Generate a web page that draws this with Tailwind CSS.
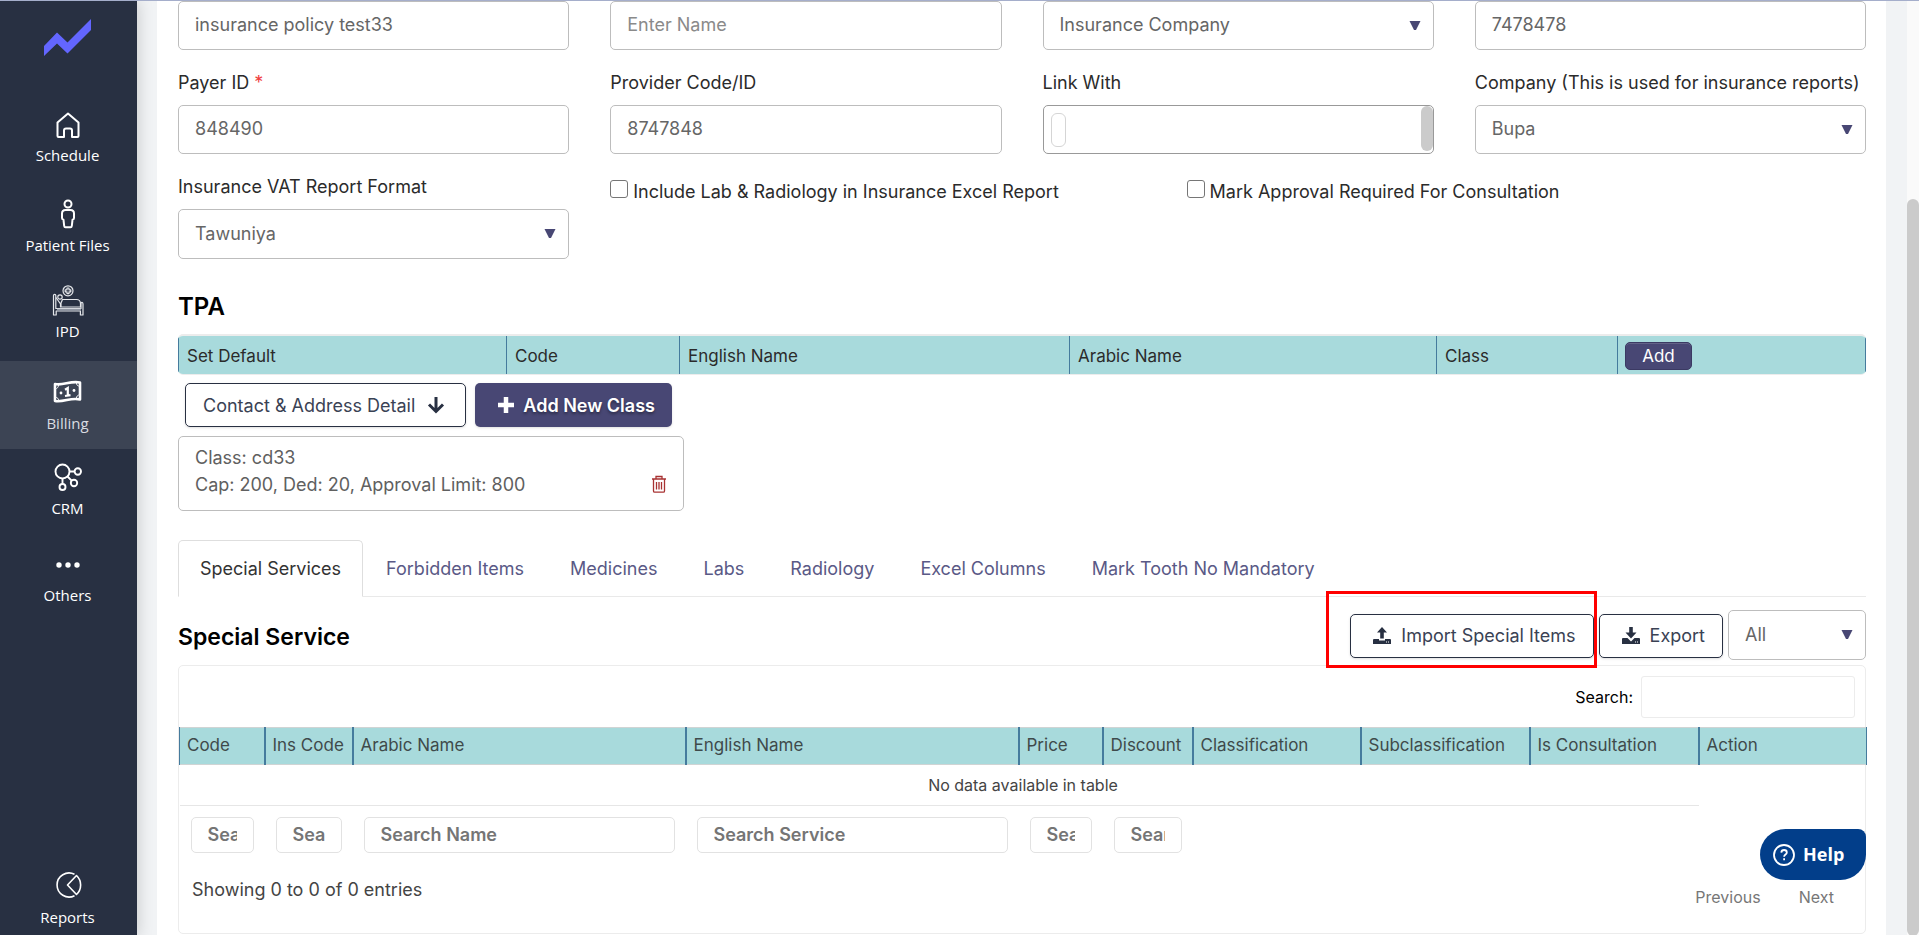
<!DOCTYPE html>
<html lang="en">
<head>
  <meta charset="UTF-8" />
  <meta name="viewport" content="width=device-width, initial-scale=1.0"/>
  <title>Insurance Policy</title>
  <script src="https://cdn.jsdelivr.net/npm/@tailwindcss/browser@4"></script>
</head>
<body class="h-screen overflow-hidden flex bg-[#f1f3f5] font-['Inter',sans-serif] text-[18px] font-normal text-[#2b2b2b] border-t border-[#a5aecb]">

  <!-- Sidebar -->
  <aside class="w-[137px] shrink-0 h-screen flex flex-col bg-[#283042] text-white font-['Open_Sans',sans-serif] text-[15px] shadow-[2px_0_14px_rgba(0,0,0,0.15)] z-10">
    <a href="#" aria-label="Home" class="h-[93px] shrink-0 flex justify-center pt-[18px] pr-0.5">
      <svg class="w-[47px] h-[37px]" viewBox="0 0 47 37" fill="#6366ff"><path d="M0 27 13 13.500 23.500 23.500 47 0V11L23.500 34.500 13 24.500 0 37Z"/></svg>
    </a>
    <nav class="flex-1 flex flex-col text-center">
      <a href="#" class="flex flex-col items-center gap-[3px] py-[15px] pr-0.5 mb-0.5">
        <svg class="w-8 h-8" viewBox="0 0 32 32" fill="none" stroke="#fff" stroke-width="2" stroke-linejoin="round"><path d="M5.500 13.500 16 4.500l10.500 9V27a1 1 0 0 1-1 1H20v-6.500a2 2 0 0 0-2-2h-4a2 2 0 0 0-2 2V28H6.500a1 1 0 0 1-1-1Z"/></svg>
        <span class="leading-[22px]">Schedule</span>
      </a>
      <a href="#" class="flex flex-col items-center gap-1 py-[15px] pr-0.5">
        <svg class="w-8 h-8" viewBox="0 0 32 32" fill="none" stroke="#fff" stroke-width="2" stroke-linejoin="round"><circle cx="16" cy="6" r="3.500"/><path d="M13.500 12h5c2 0 3.500 1.500 3.500 3.500V20c0 1-.6 1.600-1.500 1.800l-.7 6.200c-.1.900-.6 1.300-1.300 1.300h-5c-.7 0-1.200-.4-1.300-1.300l-.7-6.200C10.600 21.600 10 21 10 20v-4.500c0-2 1.500-3.500 3.500-3.500Z"/></svg>
        <span class="leading-[22px]">Patient Files</span>
      </a>
      <a href="#" class="flex flex-col items-center gap-[3px] pt-3.5 pb-[19px] pr-0.5">
        <svg class="w-8 h-8" viewBox="0 0 32 32" fill="none" stroke="#e4e6ea" stroke-width="1.200" stroke-linejoin="round"><circle cx="16" cy="5.800" r="5"/><path d="M15 3h2v1.800h1.800v2H17v1.800h-2V6.800h-1.800v-2H15Z"/><path d="M1.500 30V10.500c0-1.500 2.300-1.500 2.300 0V23.500H29V19c0-2.500 2-2 2 0v11h-2.600v-4H4.200v4Z"/><circle cx="8" cy="12" r="2.200"/><path d="M4 12.500 8.500 19v3.500M10.500 14.500h14c2.500 0 4 2 4 4v3.500H9v-4Z"/><path stroke="#9197a3" stroke-width="2" d="M5 24.800h24"/></svg>
        <span class="leading-[22px]">IPD</span>
      </a>
      <a href="#" class="flex flex-col items-center gap-1 py-[15px] pr-0.5 bg-[#3c4454] text-[#d9dce1]">
        <svg class="w-8 h-8" viewBox="0 0 32 32"><path fill="none" stroke="#fff" stroke-width="2.600" stroke-linejoin="round" d="M3 8c8 2 15-3.500 25-1.500v17c-9-2.500-16 3-25 1.500Z"/><path fill="#3c4454" stroke="#fff" stroke-width="1" d="M3.500 12.500c2 0 3-1.500 3-3.500M24.500 7c0 2 1 3 3 3M3.500 21.500c2 0 3 1 3 2.800M27.500 19c-2 0-3 1.500-3 3"/><circle cx="9" cy="17" r="1.400" fill="#fff"/><circle cx="22" cy="14.500" r="1.400" fill="#fff"/><path fill="none" stroke="#fff" stroke-width="2.200" d="M13 13.700 15.800 12v7.500M13 20l5.500-.8"/></svg>
        <span class="leading-[22px]">Billing</span>
      </a>
      <a href="#" class="flex flex-col items-center gap-[3px] pt-[13px] pb-[15px] pr-0.5">
        <svg class="w-8 h-8" viewBox="0 0 32 32" fill="none" stroke="#fff" stroke-width="1.900"><circle cx="10.500" cy="9.500" r="7"/><circle cx="25.800" cy="9.500" r="3.200"/><circle cx="22" cy="21" r="3.200"/><circle cx="10.500" cy="25" r="3"/><path d="M17.500 9.500h5M10.500 16.500V22M15.500 14.500l4.200 4.200"/></svg>
        <span class="leading-[22px]">CRM</span>
      </a>
      <a href="#" class="flex flex-col items-center gap-[3px] py-[15px] pr-0.5">
        <svg class="w-8 h-8" viewBox="0 0 32 32" fill="#fff"><circle cx="7" cy="16" r="2.700"/><circle cx="16" cy="16" r="2.700"/><circle cx="25" cy="16" r="2.700"/></svg>
        <span class="leading-[22px]">Others</span>
      </a>
      <a href="#" class="flex flex-col items-center gap-1 pb-2 pr-0.5 mt-auto">
        <svg class="w-8 h-8" viewBox="0 0 32 32" fill="none" stroke="#fff" stroke-width="1.600" stroke-linejoin="round"><path d="M22.500 4.300A12 12 0 1 0 22.500 25.700"/><path d="M24.500 5.500 15.500 15l9 9.500a13 13 0 0 0 0-19Z"/></svg>
        <span class="leading-[22px]">Reports</span>
      </a>
    </nav>
  </aside>

  <main class="flex-1 min-w-0 ml-5 mr-[21px] bg-white">
    <form>
      <!-- Policy fields -->
      <div class="flex">
        <div class="w-1/4 pl-[21px] pr-5">
          <input type="text" aria-label="Policy Name" value="insurance policy test33" class="block w-full h-[49px] px-4 pb-0.5 border border-[#bdbdbd] rounded-[5px] text-[#666]"/>
        </div>
        <div class="w-1/4 pl-[21px] pr-5">
          <input type="text" aria-label="Name" placeholder="Enter Name" class="block w-full h-[49px] px-4 pb-0.5 border border-[#bdbdbd] rounded-[5px] placeholder:text-[#8a8a8a]"/>
        </div>
        <div class="w-1/4 pl-[21px] pr-5">
          <div class="relative">
            <select aria-label="Type" class="block appearance-none w-full h-[49px] px-4 pb-0.5 border border-[#bdbdbd] rounded-[5px] text-[#666]"><option>Insurance Company</option></select>
            <svg class="absolute right-[13px] top-5 w-3 h-[9px] pointer-events-none" viewBox="0 0 12 9" fill="#484774"><path d="M.5 0h11L7 9H5Z"/></svg>
          </div>
        </div>
        <div class="w-1/4 pl-[21px] pr-5">
          <input type="text" aria-label="Number" value="7478478" class="block w-full h-[49px] px-4 pb-0.5 border border-[#bdbdbd] rounded-[5px] text-[#666]"/>
        </div>
      </div>

      <div class="flex mt-[19px]">
        <div class="w-1/4 pl-[21px] pr-5">
          <label for="payer" class="block leading-[27px] mb-[9px]">Payer ID <span class="text-[#f03e3e]">*</span></label>
          <input id="payer" type="text" value="848490" class="block w-full h-[49px] px-4 pb-0.5 border border-[#bdbdbd] rounded-[5px] text-[#666]"/>
        </div>
        <div class="w-1/4 pl-[21px] pr-5">
          <label for="provider" class="block leading-[27px] mb-[9px]">Provider Code/ID</label>
          <input id="provider" type="text" value="8747848" class="block w-full h-[49px] px-4 pb-0.5 border border-[#bdbdbd] rounded-[5px] text-[#666]"/>
        </div>
        <div class="w-1/4 pl-[21px] pr-5">
          <label for="link" class="block leading-[27px] mb-[9px]">Link With</label>
          <div class="flex justify-between h-[49px] pl-[7px] border border-[#999] rounded-[5px]">
            <input id="link" type="text" class="w-[15px] h-[34px] mt-[7px] border border-[#d5d5d5] rounded-[6px]"/>
            <div class="w-3 h-[45px] rounded-full bg-[#cbcbcb]"></div>
          </div>
        </div>
        <div class="w-1/4 pl-[21px] pr-5">
          <label for="company" class="block leading-[27px] mb-[9px] whitespace-nowrap">Company (This is used for insurance reports)</label>
          <div class="relative">
            <select id="company" class="block appearance-none w-full h-[49px] px-4 pb-0.5 border border-[#bdbdbd] rounded-[5px] text-[#666]"><option>Bupa</option></select>
            <svg class="absolute right-[13px] top-5 w-3 h-[9px] pointer-events-none" viewBox="0 0 12 9" fill="#484774"><path d="M.5 0h11L7 9H5Z"/></svg>
          </div>
        </div>
      </div>

      <div class="flex mt-[19px]">
        <div class="w-1/4 pl-[21px] pr-5">
          <label for="vat" class="block leading-[27px] mb-[9px]">Insurance VAT Report Format</label>
          <div class="relative">
            <select id="vat" class="block appearance-none w-full h-[50px] px-4 pb-0.5 border border-[#bdbdbd] rounded-[5px] text-[#666]"><option>Tawuniya</option></select>
            <svg class="absolute right-[13px] top-5 w-3 h-[9px] pointer-events-none" viewBox="0 0 12 9" fill="#484774"><path d="M.5 0h11L7 9H5Z"/></svg>
          </div>
        </div>
        <div class="w-1/3 pl-[21px] pt-[5px]">
          <label class="flex gap-[5px] leading-[27px]"><input type="checkbox" class="appearance-none w-[18px] h-[18px] mt-0.5 border border-[#767676] rounded-[3px]"/>Include Lab &amp; Radiology in Insurance Excel Report</label>
        </div>
        <div class="w-1/3 pl-[21px] pt-[5px]">
          <label class="flex gap-[5px] leading-[27px]"><input type="checkbox" class="appearance-none w-[18px] h-[18px] mt-0.5 border border-[#767676] rounded-[3px]"/>Mark Approval Required For Consultation</label>
        </div>
      </div>

      <div class="pl-[21px] pr-5">
        <!-- TPA -->
        <h2 class="mt-[30px] mb-[9px] text-[24px] leading-9 font-semibold text-black">TPA</h2>
        <div class="border-t-2 border-b border-[#ececec] rounded-[5px] overflow-hidden">
          <table class="table-fixed w-full bg-[#a8dadc] text-left text-[17px]">
            <colgroup><col class="w-[328px]"/><col class="w-[173px]"/><col class="w-[390px]"/><col class="w-[367px]"/><col class="w-[181px]"/><col class="w-[248px]"/></colgroup>
            <tr class="h-[38px]">
              <th class="px-2 pt-[3px] font-normal border-x border-[#457b9d]">Set Default</th>
              <th class="px-2 pt-[3px] font-normal border-x border-[#457b9d]">Code</th>
              <th class="px-2 pt-[3px] font-normal border-x border-[#457b9d]">English Name</th>
              <th class="px-2 pt-[3px] font-normal border-x border-[#457b9d]">Arabic Name</th>
              <th class="px-2 pt-[3px] font-normal border-x border-[#457b9d]">Class</th>
              <th class="px-[7px] pt-px font-normal border-x border-[#457b9d]"><button type="button" class="block w-[67px] h-7 rounded-[5px] border border-[#3b3a63] bg-[#484774] text-white text-[17px] leading-6 shadow-[inset_0_1px_0_rgba(255,255,255,0.15)]">Add</button></th>
            </tr>
          </table>
        </div>
        <div class="flex gap-[9px] mt-2 ml-[7px]">
          <button type="button" class="flex items-center gap-3 h-11 pl-[17px] pr-5 border border-[#283042] rounded-[5px] text-[#3a4254] shadow-sm">Contact &amp; Address Detail
            <svg class="w-[18px] h-[18px]" viewBox="0 0 18 18" fill="none" stroke="#283042" stroke-width="3"><path d="M9 1v14M2 8.500l7 7 7-7"/></svg>
          </button>
          <button type="button" class="flex items-center gap-[9px] h-11 pl-[23px] pr-[17px] rounded-[5px] bg-[#484774] text-white font-semibold [text-shadow:0_2px_3px_rgba(0,0,0,0.4)] shadow-sm">
            <svg class="w-4 h-4" viewBox="0 0 16 16" stroke="#fff" stroke-width="4.500"><path d="M8 0v16M0 8h16"/></svg>Add New Class
          </button>
        </div>
        <div class="flex items-end justify-between w-[506px] h-[75px] mt-[9px] px-4 border border-[#bdbdbd] rounded-[5px] leading-[27px] text-[#606060]">
          <p class="pb-3 whitespace-nowrap">Class: cd33<br/>Cap: 200, Ded: 20, Approval Limit: 800</p>
          <button type="button" aria-label="Delete class" class="mb-[17px]">
            <svg class="w-4 h-[18px]" viewBox="0 0 16 18" fill="none" stroke="#a83232" stroke-width="1.300"><path d="M1 4h14M5 4V1.500h6V4M2.500 4v12c0 .8.400 1.200 1.200 1.200h8.600c.8 0 1.200-.4 1.200-1.200V4M5.500 7v7.500M8 7v7.500M10.500 7v7.500"/></svg>
          </button>
        </div>

        <!-- Tabs -->
        <div class="flex h-[57px] mt-[29px] border-b border-[#e9e9e9] text-[#5a5986]">
          <a href="#" class="flex items-center px-[21px] -mb-px border border-b-white border-[#dedede] rounded-t-[5px] bg-white text-[#333]">Special Services</a>
          <a href="#" class="flex items-center px-[23px]">Forbidden Items</a>
          <a href="#" class="flex items-center px-[23px]">Medicines</a>
          <a href="#" class="flex items-center px-[23px]">Labs</a>
          <a href="#" class="flex items-center px-[23px]">Radiology</a>
          <a href="#" class="flex items-center px-[23px]">Excel Columns</a>
          <a href="#" class="flex items-center px-[23px]">Mark Tooth No Mandatory</a>
        </div>

        <div class="flex items-center gap-[5px] pt-[13px] pb-[5px]">
          <h2 class="mr-auto pt-1 text-[23px] leading-9 font-semibold text-black">Special Service</h2>
          <div class="relative pt-px">
            <button type="button" class="flex items-center gap-2.5 h-11 pl-[22px] pr-[17px] border border-[#283042] rounded-[5px] text-[#3a4254] shadow-sm">
              <svg class="w-[18px] h-[18px]" viewBox="0 0 18 18" fill="#283042"><path d="M9 0 14 5.500h-3.200V11.500H7.200V5.500H4Z"/><path d="M1 12h5v1.500h6V12h5a1 1 0 0 1 1 1v4H0v-4a1 1 0 0 1 1-1Zm12 2.500v1h1v-1Zm2 0v1h1v-1Z" fill-rule="evenodd"/></svg>Import Special Items
            </button>
            <div class="absolute -left-6 -right-[3px] -top-[22px] -bottom-2.5 border-[3px] border-[#f00] pointer-events-none"></div>
          </div>
          <div class="pt-px">
            <button type="button" class="flex items-center gap-2.5 h-11 pl-[22px] pr-[17px] border border-[#283042] rounded-[5px] text-[#3a4254] shadow-sm">
              <svg class="w-[18px] h-[18px]" viewBox="0 0 18 18" fill="#283042"><path d="M7.200 0h3.600v5.500H14.500L9 11.500 3.500 5.500H7.200Z"/><path d="M1 11h4.500L9 14.500 12.500 11H17a1 1 0 0 1 1 1v5H0v-5a1 1 0 0 1 1-1Zm12 3.500v1h1v-1Zm2 0v1h1v-1Z" fill-rule="evenodd"/></svg>Export
            </button>
          </div>
          <div class="relative w-[138px]">
            <select aria-label="Filter" class="block appearance-none w-full h-[50px] px-4 pb-0.5 border border-[#bdbdbd] rounded-[5px] text-[#666]"><option>All</option></select>
            <svg class="absolute right-[13px] top-5 w-3 h-[9px] pointer-events-none" viewBox="0 0 12 9" fill="#484774"><path d="M.5 0h11L7 9H5Z"/></svg>
          </div>
        </div>

        <!-- Special services table -->
        <div class="border border-[#ececec] rounded-[5px]">
          <div class="flex justify-end items-center gap-2 h-[61px] pr-2.5">
            <label for="search" class="text-[16px] text-black">Search:</label>
            <input id="search" type="search" class="w-[214px] h-[42px] px-3 border border-[#ececec] rounded-[3px]"/>
          </div>
          <table class="table-fixed w-full text-left text-[17px]">
            <colgroup><col class="w-[85px]"/><col class="w-[88px]"/><col class="w-[333px]"/><col class="w-[333px]"/><col class="w-[84px]"/><col class="w-[90px]"/><col class="w-[168px]"/><col class="w-[169px]"/><col class="w-[169px]"/><col class="w-[168px]"/></colgroup>
            <thead>
              <tr class="h-[37px] bg-[#a8dadc] border-y border-[#d0d4d4] text-[#3f4a4b] whitespace-nowrap">
                <th class="pl-[7px] font-normal border-l border-r-2 border-x-[#457b9d]">Code</th>
                <th class="pl-[7px] font-normal border-r-2 border-x-[#457b9d]">Ins Code</th>
                <th class="pl-[7px] font-normal border-r-2 border-x-[#457b9d]">Arabic Name</th>
                <th class="pl-[7px] font-normal border-r-2 border-x-[#457b9d]">English Name</th>
                <th class="pl-[7px] font-normal border-r-2 border-x-[#457b9d]">Price</th>
                <th class="pl-[7px] font-normal border-r-2 border-x-[#457b9d]">Discount</th>
                <th class="pl-[7px] font-normal border-r-2 border-x-[#457b9d]">Classification</th>
                <th class="pl-[7px] font-normal border-r-2 border-x-[#457b9d]">Subclassification</th>
                <th class="pl-[7px] font-normal border-r-2 border-x-[#457b9d]">Is Consultation</th>
                <th class="pl-[7px] font-normal border-r border-x-[#457b9d]">Action</th>
              </tr>
            </thead>
            <tbody>
              <tr class="h-[41px] text-center text-[16px] text-[#444]"><td colspan="10">No data available in table</td></tr>
            </tbody>
            <tfoot>
              <tr class="h-[58px]">
                <td class="px-[11px] border-t border-[#e6e6e6]"><input type="text" aria-label="Search code" placeholder="Search Code" class="block w-full h-9 px-4 border border-[#e2e2e2] rounded-[5px] text-[18px] font-semibold placeholder:text-[#757575]"/></td>
                <td class="px-[11px] border-t border-[#e6e6e6]"><input type="text" aria-label="Search ins code" placeholder="Search Ins Code" class="block w-full h-9 px-4 border border-[#e2e2e2] rounded-[5px] text-[18px] font-semibold placeholder:text-[#757575]"/></td>
                <td class="px-[11px] border-t border-[#e6e6e6]"><input type="text" aria-label="Search name" placeholder="Search Name" class="block w-full h-9 px-4 border border-[#e2e2e2] rounded-[5px] text-[18px] font-semibold placeholder:text-[#757575]"/></td>
                <td class="px-[11px] border-t border-[#e6e6e6]"><input type="text" aria-label="Search service" placeholder="Search Service" class="block w-full h-9 px-4 border border-[#e2e2e2] rounded-[5px] text-[18px] font-semibold placeholder:text-[#757575]"/></td>
                <td class="px-[11px] border-t border-[#e6e6e6]"><input type="text" aria-label="Search price" placeholder="Search Price" class="block w-full h-9 px-4 border border-[#e2e2e2] rounded-[5px] text-[18px] font-semibold placeholder:text-[#757575]"/></td>
                <td class="px-[11px] border-t border-[#e6e6e6]"><input type="text" aria-label="Search discount" placeholder="Search Discount" class="block w-full h-9 px-4 border border-[#e2e2e2] rounded-[5px] text-[18px] font-semibold placeholder:text-[#757575]"/></td>
                <td class="border-t border-[#e6e6e6]"></td>
                <td class="border-t border-[#e6e6e6]"></td>
                <td class="border-t border-[#e6e6e6]"></td>
                <td></td>
              </tr>
            </tfoot>
          </table>
          <div class="flex justify-between h-[69px] pt-3 pl-[13px] pr-[31px] text-[#444]">
            <p class="leading-[27px]">Showing 0 to 0 of 0 entries</p>
            <div class="flex gap-[38px] pt-2 text-[16px] leading-[27px] text-[#777]">
              <a href="#">Previous</a>
              <a href="#">Next</a>
            </div>
          </div>
        </div>
      </div>
    </form>
  </main>

  <!-- Page scrollbar -->
  <div class="w-3 shrink-0 h-screen pt-[198px] bg-[#fafafa]">
    <div class="h-full rounded-full bg-[#cbcbcb]"></div>
  </div>

  <button type="button" class="fixed right-[53px] bottom-[55px] flex items-center gap-2 w-[106px] h-[51px] pl-[13px] rounded-[26px] rounded-tr-[8px] bg-[#023e8a] text-white font-['Open_Sans',sans-serif] text-[18px] font-bold">
    <svg class="w-[22px] h-[22px]" viewBox="0 0 22 22" fill="none" stroke="#fff" stroke-width="1.800"><circle cx="11" cy="11" r="10"/><path d="M8.300 8.600c.1-1.700 1.200-2.600 2.800-2.600s2.700 1 2.700 2.400c0 2.100-2.700 2.100-2.700 4.300M11.100 14.300v2"/></svg>Help
  </button>
</body>
</html>
